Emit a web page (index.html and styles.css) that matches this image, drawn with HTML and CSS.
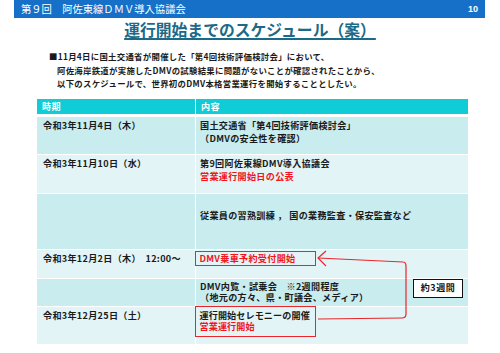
FILE: index.html
```html
<!DOCTYPE html>
<html lang="ja">
<head>
<meta charset="utf-8">
<link rel="stylesheet" href="styles.css">
</head>
<body>
<div class="page">
  <div class="topbar"><span>第９回　阿佐東線ＤＭＶ導入協議会</span><span class="pno">10</span></div>
  <h1 class="title">運行開始までのスケジュール（案）</h1>
  <div class="intro">
    <div>■11月4日に国土交通省が開催した「第4回技術評価検討会」において、</div>
    <div class="ind">阿佐海岸鉄道が実施したDMVの試験結果に問題がないことが確認されたことから、</div>
    <div class="ind">以下のスケジュールで、世界初のDMV本格営業運行を開始することとしたい。</div>
  </div>
  <div class="sched">
    <div class="th">時期</div>
    <div class="th">内容</div>

    <div class="td dark">令和3年11月4日（木）</div>
    <div class="td dark c2">国土交通省「第4回技術評価検討会」<br>（DMVの安全性を確認）</div>

    <div class="td light">令和3年11月10日（水）</div>
    <div class="td light c2">第9回阿佐東線DMV導入協議会<br><span class="red">営業運行開始日の公表</span></div>

    <div class="td dark"></div>
    <div class="td dark c2 mid">従業員の習熟訓練 ， 国の業務監査・保安監査など</div>

    <div class="td light">令和3年12月2日（木）&nbsp; 12:00～</div>
    <div class="td light c2 boxed"><div class="redbox one">DMV乗車予約受付開始</div></div>

    <div class="td dark">&nbsp;</div>
    <div class="td dark c2 tight">DMV内覧・試乗会　※2週間程度<br>（地元の方々、県・町議会、メディア）</div>

    <div class="td light">令和3年12月25日（土）</div>
    <div class="td light c2 boxed"><div class="redbox two">運行開始セレモニーの開催<br><span class="red">営業運行開始</span></div></div>
  </div>

  <svg class="arrow" width="500" height="353" viewBox="0 0 500 353">
    <path d="M318 258 L403 262 Q406 262 406 266 L406 314 Q406 318 402 318 L318 319" fill="none" stroke="#e8262b" stroke-width="1.2"/>
    <path d="M326 251 L318 258 L326 266" fill="none" stroke="#e8262b" stroke-width="1.2"/>
  </svg>
  <div class="weeks">約3週間</div>
</div>
</body>
</html>
```
FILE: styles.css
```css
* { box-sizing: border-box; }
html, body { margin: 0; padding: 0; background: #fff; }
body {
  width: 500px;
  height: 353px;
  overflow: hidden;
  font-family: "Noto Sans CJK JP", "Noto Sans", sans-serif;
  color: #111;
}
.page { position: relative; width: 500px; height: 353px; }

.topbar {
  margin: 0 15px 0 14px;
  height: 18px;
  background: #1670c8;
  color: #fff;
  display: flex;
  justify-content: space-between;
  align-items: center;
  padding: 0 7px 0 7px;
  font-size: 10.3px;
  line-height: 18px;
}
.topbar .pno { font-weight: 700; font-size: 9px; font-family: "Liberation Sans", sans-serif; }

.title {
  margin: 1px 0 0 0;
  height: 22px;
  text-align: center;
  font-size: 15.8px;
  line-height: 22px;
  font-weight: 700;
  color: #1a6a88;
  text-decoration: underline;
  text-decoration-thickness: 1.5px;
  text-underline-offset: 2px;
}

.intro {
  margin: 9px 0 0 49px;
  font-size: 8.4px;
  letter-spacing: 0.3px;
  line-height: 13.5px;
  font-weight: 700;
  color: #1a1a1a;
}
.intro .ind { padding-left: 8px; }

.sched {
  margin: 8px 0 0 37px;
  width: 431px;
  display: grid;
  grid-template-columns: 158px 272px;
  grid-template-rows: 17px 37px 38px 55px 28px 27px 37px;
  column-gap: 1px;
  row-gap: 1px;
  font-size: 9.1px;
  letter-spacing: 0.3px;
  font-weight: 700;
}
.th {
  height: 15px;
  background: #10ccd7;
  color: #fff;
  line-height: 15px;
  padding-left: 5px;
}
.td {
  padding: 2px 4px 0 6px;
  line-height: 13px;
  color: #1a1a1a;
  white-space: nowrap;
}
.td.c2 { padding-left: 4px; }
.dark { background: #c9ecef; }
.light { background: #e3f4f7; }
.mid { padding-top: 15px; }
.tight { padding-top: 2.5px; line-height: 11px; }
.red { color: #f0161b; }

.td.boxed { padding: 0; }
.redbox {
  width: 121px;
  margin-left: -1px;
  border: 1.5px solid #e8262b;
  background: transparent;
  padding: 0 0 0 3.5px;
}
.redbox.one {
  margin-top: 1px;
  height: 15px;
  line-height: 12px;
  color: #f0161b;
}
.redbox.two {
  margin-top: -1px;
  height: 31px;
  padding-top: 3px;
  line-height: 11px;
  letter-spacing: 0.1px;
}

.arrow { position: absolute; left: 0; top: 0; pointer-events: none; }
.weeks {
  position: absolute;
  left: 413px;
  top: 279px;
  width: 50px;
  height: 19px;
  border: 1.5px solid #111;
  background: #fff;
  font-size: 9px;
  letter-spacing: 0.6px;
  font-weight: 700;
  line-height: 16px;
  text-align: center;
}
```
